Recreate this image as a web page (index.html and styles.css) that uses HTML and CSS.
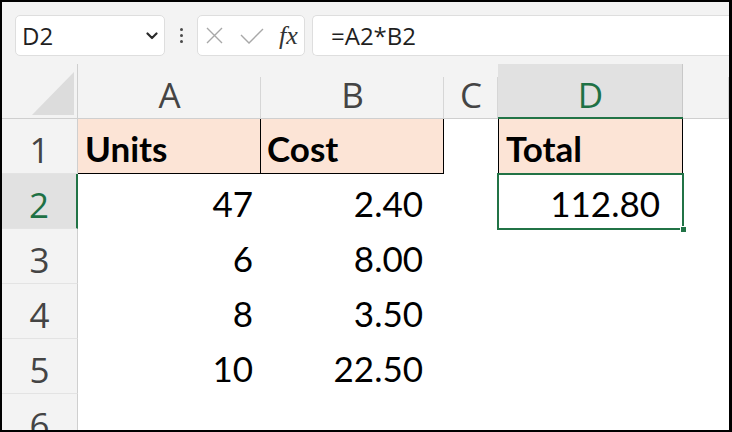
FILE: index.html
```html
<!DOCTYPE html>
<html>
<head>
<meta charset="utf-8">
<link rel="stylesheet" href="styles.css">
</head>
<body>
<div class="frame">
  <div class="toolbar">
    <div class="namebox">
      <span class="name">D2</span>
      <svg class="chev" width="12" height="8" viewBox="0 0 12 8"><path d="M1.5 1.5 L6 6 L10.5 1.5" fill="none" stroke="#2b2b2b" stroke-width="2.2" stroke-linecap="round" stroke-linejoin="round"/></svg>
    </div>
    <div class="dots"><i></i><i></i><i></i></div>
    <div class="fxbox">
      <svg width="17" height="17" viewBox="0 0 17 17"><path d="M1 1 L16 16 M16 1 L1 16" stroke="#a8a8a8" stroke-width="1.4" fill="none"/></svg>
      <svg width="24" height="16" viewBox="0 0 24 16"><path d="M1 7 L9 15 L23 1" stroke="#a8a8a8" stroke-width="1.4" fill="none"/></svg>
      <span class="fx">fx</span>
    </div>
    <div class="formula">=A2*B2</div>
  </div>
  <div class="sheet">
    <div class="corner"><svg width="42" height="43" viewBox="0 0 42 43"><polygon points="42,0 42,43 0,43" fill="#dcdcdc"/></svg></div>
    <div class="ch">A</div>
    <div class="ch">B</div>
    <div class="ch">C</div>
    <div class="ch sel">D</div>
    <div class="ch last"></div>

    <div class="rh">1</div>
    <div class="c hd a1">Units</div>
    <div class="c hd b1">Cost</div>
    <div class="c"></div>
    <div class="c hd d1">Total</div>
    <div class="c"></div>

    <div class="rh rsel">2</div>
    <div class="c num colA">47</div>
    <div class="c num colB">2.40</div>
    <div class="c"></div>
    <div class="c num colD active">112.80</div>
    <div class="c"></div>

    <div class="rh">3</div>
    <div class="c num colA">6</div>
    <div class="c num colB">8.00</div>
    <div class="c"></div>
    <div class="c"></div>
    <div class="c"></div>

    <div class="rh">4</div>
    <div class="c num colA">8</div>
    <div class="c num colB">3.50</div>
    <div class="c"></div>
    <div class="c"></div>
    <div class="c"></div>

    <div class="rh">5</div>
    <div class="c num colA">10</div>
    <div class="c num colB">22.50</div>
    <div class="c"></div>
    <div class="c"></div>
    <div class="c"></div>

    <div class="rh">6</div>
    <div class="c"></div>
    <div class="c"></div>
    <div class="c"></div>
    <div class="c"></div>
    <div class="c"></div>
  </div>
</div>
</body>
</html>
```

FILE: styles.css
```css
html, body {
  margin: 0;
  padding: 0;
  background: #000;
}

.frame {
  width: 732px;
  height: 432px;
  box-sizing: border-box;
  border: 2px solid #000;
  border-right-width: 3px;
  background: #fff;
  overflow: hidden;
  display: flex;
  flex-direction: column;
}

.toolbar {
  flex: none;
  height: 62px;
  box-sizing: border-box;
  background: #f3f3f3;
  display: flex;
  align-items: flex-start;
  padding: 13px 0 0 13px;
  font-family: "Open Sans", "Noto Sans", sans-serif;
}

.namebox {
  width: 150px;
  height: 41px;
  box-sizing: border-box;
  background: #fff;
  border: 1px solid #dedede;
  border-radius: 5px;
  display: flex;
  align-items: center;
  padding-left: 6px;
}

.name {
  font-size: 24px;
  color: #1f1f1f;
}

.chev {
  margin-left: auto;
  margin-right: 6px;
}

.dots {
  width: 32px;
  height: 41px;
  display: flex;
  flex-direction: column;
  align-items: center;
  justify-content: center;
  gap: 3px;
}

.dots i {
  width: 3px;
  height: 3px;
  border-radius: 50%;
  background: #4a4a4a;
}

.fxbox {
  width: 108px;
  height: 41px;
  box-sizing: border-box;
  background: #fff;
  border: 1px solid #dedede;
  border-radius: 5px;
  display: flex;
  align-items: center;
  padding-left: 8px;
  gap: 17px;
  margin-right: 7px;
}

.fx {
  font-family: "Liberation Serif", "DejaVu Serif", serif;
  font-style: italic;
  font-size: 26px;
  color: #333;
  margin-left: -2px;
}

.formula {
  flex: 1;
  height: 41px;
  box-sizing: border-box;
  background: #fff;
  border: 1px solid #dedede;
  border-right: none;
  border-radius: 5px 0 0 5px;
  display: flex;
  align-items: center;
  padding-left: 18px;
  font-size: 24px;
  color: #1f1f1f;
}

.sheet {
  flex: none;
  display: grid;
  grid-template-columns: 76px 183px 183px 54px 185px 1fr;
  grid-auto-rows: 55px;
}

.corner {
  background: #f3f3f3;
  border-right: 1px solid #cfcfcf;
  border-bottom: 1px solid #cfcfcf;
  display: flex;
  justify-content: flex-end;
  align-items: flex-end;
  padding: 0 3px 3px 0;
}

.ch {
  background: linear-gradient(#d6d6d6, #d6d6d6) right bottom / 1px 41px no-repeat, #f3f3f3;
  border-bottom: 1px solid #cfcfcf;
  font-family: "Open Sans", "Noto Sans", sans-serif;
  font-size: 35px;
  line-height: 1;
  color: #444;
  display: flex;
  justify-content: center;
  align-items: flex-end;
  padding-bottom: 6px;
}

.ch.sel {
  background: linear-gradient(#c8c8c8, #c8c8c8) right bottom / 1px 55px no-repeat, #e1e1e1;
  border-bottom: 2px solid #217346;
  padding-bottom: 5px;
  color: #1e7145;
}

.rh {
  background: #f3f3f3;
  border-right: 1px solid #cfcfcf;
  border-bottom: 1px solid #e3e3e3;
  font-family: "Open Sans", "Noto Sans", sans-serif;
  font-size: 35px;
  line-height: 1;
  color: #444;
  display: flex;
  justify-content: center;
  align-items: flex-end;
  padding-bottom: 6px;
}

.rh.rsel {
  background: #e1e1e1;
  border-right: 2px solid #217346;
  color: #1e7145;
}

.c {
  background: #fff;
  font-family: "Lato", "Carlito", sans-serif;
  font-size: 35px;
  line-height: 1;
  color: #000;
  display: flex;
  align-items: flex-end;
  padding-bottom: 8px;
}

.hd {
  background: #fce4d6;
  font-weight: bold;
  padding-left: 7px;
  border-bottom: 1px solid #000;
  padding-bottom: 7px;
}

.a1 {
  border-right: 1px solid #000;
}

.b1 {
  border-right: 1px solid #000;
  padding-left: 6px;
}

.d1 {
  border-left: 1px solid #000;
  border-right: 1px solid #000;
  border-bottom-color: #217346;
}

.num {
  justify-content: flex-end;
}

.colA { padding-right: 8px; }
.colB { padding-right: 21px; }
.colD { padding-right: 23px; }

.active {
  position: relative;
  outline: 2px solid #217346;
  outline-offset: -1px;
}

.active::after {
  content: "";
  position: absolute;
  right: -4px;
  bottom: -4px;
  width: 5px;
  height: 5px;
  background: #217346;
  border: 1px solid #fff;
}
```
